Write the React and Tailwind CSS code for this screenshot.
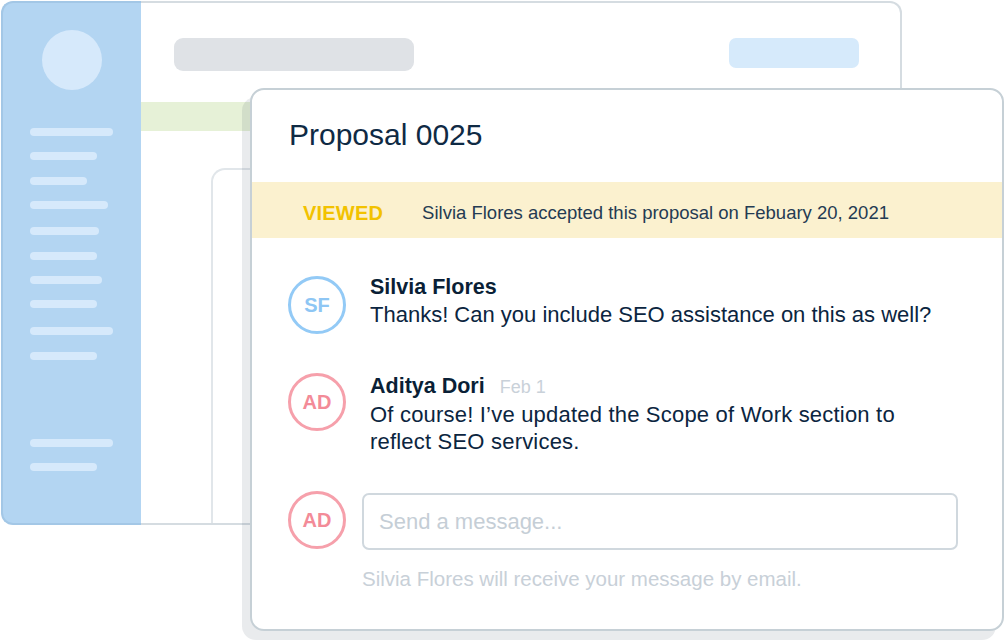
import React from "react";

const sideLines = [
  "mt-[38px] w-[83px]",
  "mt-[16px] w-[67px]",
  "mt-[17px] w-[57px]",
  "mt-[16px] w-[78px]",
  "mt-[18px] w-[69px]",
  "mt-[17px] w-[67px]",
  "mt-[16px] w-[72px]",
  "mt-[16px] w-[67px]",
  "mt-[19px] w-[83px]",
  "mt-[17px] w-[67px]",
  "mt-[79px] w-[83px]",
  "mt-[16px] w-[67px]",
];

const Avatar = ({ initials, tone, className = "" }) => {
  const colors =
    tone === "blue"
      ? "border-[#93caf6] text-[#8ec6f4]"
      : "border-[#f6a0ab] text-[#f38b98]";
  return (
    <div
      className={`w-[58px] h-[58px] shrink-0 rounded-full border-[3px] bg-white flex items-center justify-center text-[20px] font-semibold ${colors} ${className}`}
    >
      {initials}
    </div>
  );
};

// background app window (drawn, not interactive)
const BackWindow = () => (
  <div className="absolute left-[1px] top-[1px] w-[901px] h-[524px] flex">
    <div className="w-[140px] bg-[#b3d5f2] border-2 border-r-0 border-[#a3c7e6] rounded-l-[12px] flex flex-col pl-[27px]">
      <div className="ml-[12px] mt-[27px] w-[60px] h-[60px] rounded-full bg-[#d6e9fb]" />
      {sideLines.map((cls, i) => (
        <div key={i} className={`h-[8px] rounded-full bg-[#d6e9fb] ${cls}`} />
      ))}
    </div>
    <div className="flex-1 bg-white border-2 border-l-0 border-[#d5dce1] rounded-r-[12px] flex flex-col">
      <div className="flex justify-between items-start pl-[33px] pr-[41px] pt-[35px]">
        <div className="w-[240px] h-[33px] rounded-[9px] bg-[#dfe2e6]" />
        <div className="w-[130px] h-[30px] rounded-[7px] bg-[#d6eafb]" />
      </div>
      <div className="mt-[31px] h-[29px] bg-[#e6f1d7]" />
      <div className="flex-1 ml-[70px] mt-[37px] border-2 border-b-0 border-[#e1e6ea] rounded-t-[14px]" />
    </div>
  </div>
);

const ProposalCard = () => (
  <div className="absolute left-[250px] top-[88px] w-[754px] h-[543px] bg-white border-2 border-[#c6d0d6] rounded-[14px] shadow-[-8px_9px_0_0_rgba(44,62,80,0.1)] flex flex-col">
    <h1 className="pl-[37px] pt-[27px] text-[30px] leading-[36px] text-[#0f2a44]">
      Proposal 0025
    </h1>

    {/* status banner */}
    <div className="mt-[29px] h-[56px] bg-[#fbf1cf] flex items-center pl-[51px] pt-[6px] gap-[39px]">
      <span className="text-[20px] font-bold text-[#f2c200] tracking-[0.2px]">VIEWED</span>
      <span className="text-[18.5px] text-[#243b53]">
        Silvia Flores accepted this proposal on Febuary 20, 2021
      </span>
    </div>

    {/* messages */}
    <div className="pl-[36px] flex flex-col">
      <div className="mt-[36px] flex items-start gap-[24px]">
        <Avatar initials="SF" tone="blue" className="mt-[2px]" />
        <div className="leading-[27px] text-[#0b2540]">
          <div className="text-[21.5px] font-bold text-[#0a1f36]">Silvia Flores</div>
          <div className="text-[22px]">Thanks! Can you include SEO assistance on this as well?</div>
        </div>
      </div>

      <div className="mt-[39px] flex items-start gap-[24px]">
        <Avatar initials="AD" tone="pink" />
        <div className="leading-[27px] text-[#0b2540]">
          <div className="flex items-baseline">
            <span className="text-[21.5px] font-bold text-[#0a1f36]">Aditya Dori</span>
            <span className="ml-[15px] text-[18px] text-[#c9d1d9]">Feb 1</span>
          </div>
          <div className="text-[22px] tracking-[0.2px]">
            Of course! I’ve updated the Scope of Work section to
            <br />
            reflect SEO services.
          </div>
        </div>
      </div>

      <div className="mt-[36px] flex items-start gap-[16px]">
        <Avatar initials="AD" tone="pink" />
        <div className="mt-[2px] w-[596px] h-[57px] border-2 border-[#d0d8de] rounded-[7px] flex items-center pl-[15px]">
          <input
            type="text"
            placeholder="Send a message..."
            className="w-full bg-transparent outline-none text-[22px] text-[#0b2540] placeholder:text-[#c5ced6]"
          />
        </div>
      </div>
      <p className="mt-[17px] ml-[74px] text-[20.5px] leading-[24px] text-[#c8d0d8]">
        Silvia Flores will receive your message by email.
      </p>
    </div>
  </div>
);

const App = () => {
  return (
    <div className="relative w-[1004px] h-[640px] bg-white overflow-hidden font-['Liberation_Sans',Arial,sans-serif]">
      <BackWindow />
      <ProposalCard />
    </div>
  );
};

export default App;
